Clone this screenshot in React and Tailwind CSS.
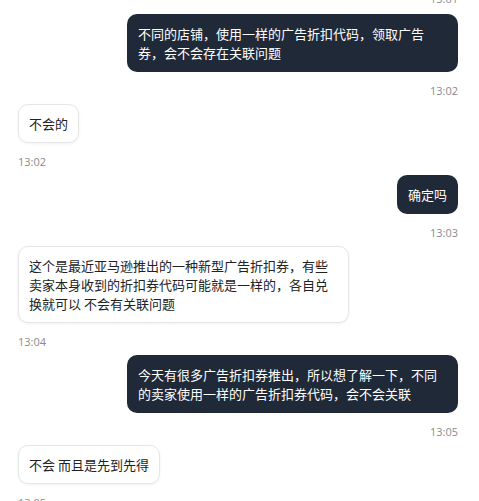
const MESSAGES = [
    { mine: true, text: '不同的店铺，使用一样的广告折扣代码，领取广告券，会不会存在关联问题', time: '13:02' },
    { mine: false, text: '不会的', time: '13:02' },
    { mine: true, text: '确定吗', time: '13:03' },
    {
        mine: false,
        text: '这个是最近亚马逊推出的一种新型广告折扣券，有些卖家本身收到的折扣券代码可能就是一样的，各自兑换就可以 不会有关联问题',
        time: '13:04',
    },
    { mine: true, text: '今天有很多广告折扣券推出，所以想了解一下，不同的卖家使用一样的广告折扣券代码，会不会关联', time: '13:05' },
    { mine: false, text: '不会 而且是先到先得', time: '13:05' },
];

function Time({ value, mine, className = '' }) {
    return (
        <div
            className={`text-[11px] leading-4 text-[#8a8a8a] font-['Open_Sans',sans-serif] ${mine ? 'text-right' : 'text-left'} ${className}`}
        >
            {value}
        </div>
    );
}

export default function App() {
    return (
        <div className="h-[501px] w-[479px] overflow-hidden bg-white pl-[18px] pr-[21px] font-['Noto_Sans_CJK_SC',sans-serif]">
            <Time value="13:01" mine className="-mt-[9px]" />
            <div className="mt-[7px] flex flex-col">
                {MESSAGES.map((m, i) => (
                    <div key={i} className={`flex flex-col ${i > 0 ? 'mt-[5px]' : ''} ${m.mine ? 'items-end' : 'items-start'}`}>
                        <div
                            className={
                                m.mine
                                    ? 'max-w-[331px] rounded-[10px] bg-[#1f2937] px-[11px] py-[10px] text-[13px] leading-[19px] text-white'
                                    : 'max-w-[331px] rounded-[10px] border border-[#e6e6e6] bg-white px-[10px] py-[9px] text-[13px] leading-[19px] text-[#222] shadow-[0_1px_3px_rgba(0,0,0,0.06)]'
                            }
                        >
                            {m.text}
                        </div>
                        <Time value={m.time} mine={m.mine} className="mt-[11px] w-full" />
                    </div>
                ))}
            </div>
        </div>
    );
}
